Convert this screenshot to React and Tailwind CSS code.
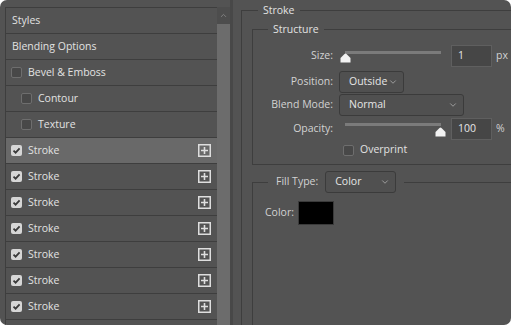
import React from "react";
import { ChevronDown, ChevronUp } from "lucide-react";

const font = { fontFamily: '"Open Sans", "Liberation Sans", sans-serif' };

const Check = ({ on }) =>
  on ? (
    <div className="w-[11px] h-[11px] rounded-[2px] bg-[#d6d6d6] flex items-center justify-center shrink-0">
      <svg width="9" height="9" viewBox="0 0 9 9">
        <path d="M1.5 4.6 L3.6 6.7 L7.6 2.4" stroke="#3a3a3a" strokeWidth="1.8" fill="none" />
      </svg>
    </div>
  ) : (
    <div className="w-[11px] h-[11px] rounded-[2px] bg-[#484848] border border-[#6e6e6e] shrink-0" />
  );

const Plus = () => (
  <svg width="13" height="13" viewBox="0 0 13 13" className="shrink-0">
    <rect x="0.75" y="0.75" width="11.5" height="11.5" fill="none" stroke="#dedede" strokeWidth="1.5" />
    <path d="M6.5 3 V10 M3 6.5 H10" stroke="#dedede" strokeWidth="1.6" />
  </svg>
);

const Row = ({ children, selected, plus }) => (
  <div
    className={`h-[26px] flex items-center border-b border-[#3e3e3e] pr-[6px] ${
      selected ? "bg-[#696969]" : ""
    }`}
  >
    <div className="flex-1 flex items-center">{children}</div>
    {plus && <Plus />}
  </div>
);

const Thumb = () => (
  <svg width="11" height="10" viewBox="0 0 11 10">
    <path d="M5.5 0.5 Q6 0.5 6.5 1 L10.5 5 V9.5 H0.5 V5 L4.5 1 Q5 0.5 5.5 0.5 Z" fill="#f2f2f2" />
  </svg>
);

const Select = ({ value, w }) => (
  <div
    className={`${w} h-[22px] flex items-center justify-between pl-[9px] pr-[5px] border border-[#3b3b3b] rounded-[3px] bg-[#505050] text-[#e6e6e6]`}
  >
    <span>{value}</span>
    <ChevronDown size={10} strokeWidth={1.5} color="#c8c8c8" />
  </div>
);

const Field = ({ value }) => (
  <div className="w-[41px] h-[22px] flex items-center pl-[6px] bg-[#464646] border border-[#5f5f5f] text-[#e6e6e6]">
    {value}
  </div>
);

export default function App() {
  const strokes = [true, false, false, false, false, false, false];
  return (
    <div className="w-[511px] h-[325px] bg-white">
      <div
        className="w-[511px] h-[325px] bg-[#535353] rounded-[7px] overflow-hidden flex text-[10.5px] text-[#e2e2e2]"
        style={font}
      >
        {/* styles list */}
        <div className="ml-[5px] mt-[7px] w-[212px] shrink-0 border-t border-l border-[#3e3e3e]">
          <Row>
            <span className="pl-[6px]">Styles</span>
          </Row>
          <Row>
            <span className="pl-[6px]">Blending Options</span>
          </Row>
          <Row>
            <div className="pl-[5px] flex items-center gap-[6px]">
              <Check />
              <span>Bevel &amp; Emboss</span>
            </div>
          </Row>
          <Row>
            <div className="pl-[15px] flex items-center gap-[6px]">
              <Check />
              <span>Contour</span>
            </div>
          </Row>
          <Row>
            <div className="pl-[15px] flex items-center gap-[6px]">
              <Check />
              <span>Texture</span>
            </div>
          </Row>
          {strokes.map((sel, i) => (
            <Row key={i} selected={sel} plus>
              <div className="pl-[5px] flex items-center gap-[6px]">
                <Check on />
                <span>Stroke</span>
              </div>
            </Row>
          ))}
        </div>

        {/* scrollbar */}
        <div className="mt-[7px] w-[13px] shrink-0 flex flex-col">
          <div className="h-[17px] bg-[#4d4d4d] flex justify-center pt-[4px]">
            <ChevronUp size={9} strokeWidth={2} color="#8e8e8e" />
          </div>
          <div className="flex-1 bg-[#6c6c6c]" />
        </div>
        <div className="w-[3px] shrink-0 bg-[#484848]" />

        {/* stroke settings */}
        <fieldset className="ml-[8px] mt-[3px] w-[290px] h-[340px] shrink-0 border-t border-l border-[#3e3e3e] pl-[10px] pt-[5px]">
          <legend className="ml-[6px] px-[5px] leading-[14px]">Stroke</legend>

          <fieldset className="w-full border border-[#3e3e3e] pt-[9px] pb-[6px]">
            <legend className="ml-[15px] px-[5px] leading-[14px]">Structure</legend>

            <div className="flex items-center h-[22px]">
              <span className="w-[80px] text-right text-[#d2d2d2]">Size:</span>
              <div className="ml-[6px] w-[112px] h-[22px] relative">
                <div className="absolute left-[6px] top-[6px] w-[96px] h-[3px] bg-[#7b7b7b]" />
                <div className="absolute left-[1px] top-[8px] flex">
                  <Thumb />
                </div>
              </div>
              <Field value="1" />
              <span className="ml-[4px] text-[#d2d2d2]">px</span>
            </div>

            <div className="flex items-center h-[22px] mt-[4px]">
              <span className="w-[80px] text-right text-[#d2d2d2]">Position:</span>
              <div className="ml-[6px]">
                <Select value="Outside" w="w-[65px]" />
              </div>
            </div>

            <div className="flex items-center h-[22px] mt-[1px]">
              <span className="w-[80px] text-right text-[#d2d2d2]">Blend Mode:</span>
              <div className="ml-[6px]">
                <Select value="Normal" w="w-[125px]" />
              </div>
            </div>

            <div className="flex items-center h-[22px] mt-[2px]">
              <span className="w-[80px] text-right text-[#d2d2d2]">Opacity:</span>
              <div className="ml-[6px] w-[112px] h-[22px] relative">
                <div className="absolute left-[6px] top-[5px] w-[96px] h-[3px] bg-[#7b7b7b]" />
                <div className="absolute left-[96px] top-[9px] flex">
                  <Thumb />
                </div>
              </div>
              <Field value="100" />
              <span className="ml-[4px] text-[#d2d2d2]">%</span>
            </div>

            <div className="flex items-center h-[16px] mt-[2px] pl-[90px] gap-[6px]">
              <Check />
              <span>Overprint</span>
            </div>
          </fieldset>

          <fieldset className="mt-[6px] w-full h-[200px] border-t border-l border-[#3e3e3e] pt-[8px]">
            <legend className="ml-[15px] px-[8px] flex items-center gap-[7px]">
              <span className="text-[#d2d2d2]">Fill Type:</span>
              <Select value="Color" w="w-[71px]" />
            </legend>
            <div className="flex items-center pl-[12px] gap-[4px]">
              <span className="text-[#d2d2d2]">Color:</span>
              <div className="w-[36px] h-[24px] bg-black border border-[#3a3a3a]" />
            </div>
          </fieldset>
        </fieldset>
      </div>
    </div>
  );
}
